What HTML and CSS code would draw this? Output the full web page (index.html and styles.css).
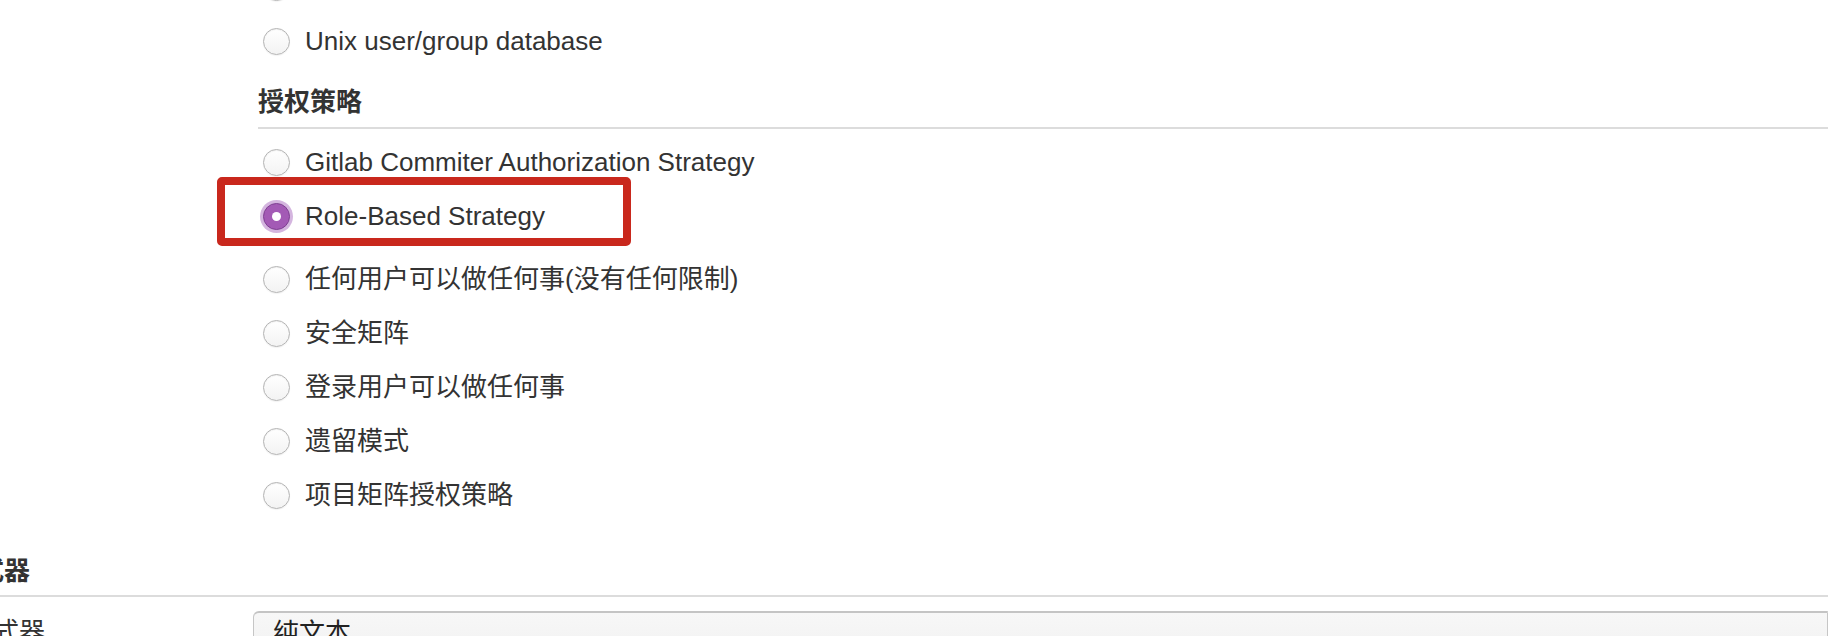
FILE: index.html
```html
<!DOCTYPE html>
<html lang="zh-CN">
<head>
<meta charset="utf-8">
<title>Configure Global Security</title>
<link rel="stylesheet" href="styles.css">
</head>
<body>
<div class="page">
  <div class="security">
    <div class="opt"><span class="radio"></span></div>
    <div class="opt"><span class="radio"></span><span class="label">Unix user/group database</span></div>
    <div class="sec-head">授权策略</div>
    <div class="opts">
      <div class="opt"><span class="radio"></span><span class="label">Gitlab Commiter Authorization Strategy</span></div>
      <div class="opt opt-selected"><span class="radio radio-on"></span><span class="label">Role-Based Strategy</span></div>
      <div class="opt"><span class="radio"></span><span class="label">任何用户可以做任何事(没有任何限制)</span></div>
      <div class="opt"><span class="radio"></span><span class="label">安全矩阵</span></div>
      <div class="opt"><span class="radio"></span><span class="label">登录用户可以做任何事</span></div>
      <div class="opt"><span class="radio"></span><span class="label">遗留模式</span></div>
      <div class="opt"><span class="radio"></span><span class="label">项目矩阵授权策略</span></div>
    </div>
  </div>
  <div class="top-head">标记格式器</div>
  <div class="row">
    <div class="row-label">标记格式器</div>
    <div class="select">纯文本</div>
  </div>
</div>
<div class="highlight"></div>
</body>
</html>
```

FILE: styles.css
```css
html, body {
  margin: 0;
  padding: 0;
  background: #ffffff;
  overflow: hidden;
}
body {
  position: relative;
  width: 1828px;
  height: 636px;
  font-family: "Liberation Sans", "Noto Sans CJK SC", sans-serif;
  font-size: 26px;
  color: #333333;
}
.page {
  margin-left: -100px;
  width: 1928px;
}
.security {
  margin-left: 358px;
  margin-top: -40px;
}
.opt {
  height: 54px;
  display: flex;
  align-items: center;
  gap: 15px;
  padding-left: 5px;
}
.opts {
  margin-top: 6px;
}
.opt-selected {
  margin-bottom: 9px;
}
.radio {
  width: 27px;
  height: 27px;
  box-sizing: border-box;
  border-radius: 50%;
  border: 1px solid #b4b4b4;
  background: linear-gradient(#ffffff, #f3f3f3);
  box-shadow: inset 0 1px 1px rgba(0,0,0,0.06), 0 1px 1px rgba(0,0,0,0.05);
  flex: none;
  display: flex;
  align-items: center;
  justify-content: center;
}
.radio-on {
  background: #a35ab5;
  border: 1px solid #7e3f91;
  box-shadow: 0 0 0 3px rgba(176, 120, 196, 0.55);
}
.radio-on::after {
  content: "";
  width: 9px;
  height: 9px;
  border-radius: 50%;
  background: #ffffff;
}
.label {
  line-height: 34px;
  white-space: nowrap;
}
.sec-head {
  font-weight: bold;
  line-height: 34px;
  padding-top: 17px;
  padding-bottom: 8px;
  border-bottom: 2px solid #dcdcdc;
}
.top-head {
  font-weight: bold;
  line-height: 34px;
  padding-top: 32px;
  padding-bottom: 7px;
  border-bottom: 2px solid #dcdcdc;
}
.row {
  display: grid;
  grid-template-columns: 353px 1fr;
  margin-top: 14px;
}
.row-label {
  padding-left: 15px;
  line-height: 34px;
  padding-top: 4px;
}
.select {
  height: 44px;
  box-sizing: border-box;
  border: 1px solid #c6c6c6;
  border-top: 2px solid #c4c4c4;
  border-radius: 6px 0 0 0;
  background: linear-gradient(#f7f7f7, #f2f2f2);
  padding-left: 19px;
  line-height: 40px;
  color: #222222;
}
.highlight {
  position: absolute;
  left: 217px;
  top: 177px;
  width: 414px;
  height: 69px;
  box-sizing: border-box;
  border: 8px solid #c9281d;
  border-radius: 5px;
}
```
